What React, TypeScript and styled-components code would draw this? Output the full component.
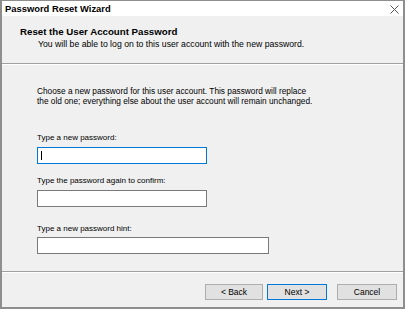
import React from "react"
import styled, { createGlobalStyle } from "styled-components"

const GlobalStyle = createGlobalStyle`
    html, body {
        margin: 0;
        padding: 0;
        background: #f0f0f0;
    }
    body {
        font-family: "Liberation Sans", Arial, sans-serif;
        color: #000;
    }
`

const Window = styled.div`
    box-sizing: border-box;
    width: 405px;
    height: 309px;
    border: 2px solid #8e8e8e;
    border-top-width: 1px;
    background: #f0f0f0;
    display: flex;
    flex-direction: column;
`

const TitleBar = styled.div`
    height: 15px;
    background: #fff;
    display: flex;
    align-items: center;
    justify-content: space-between;
    padding: 0 4px 0 3px;
`

const TitleText = styled.span`
    font-size: 9.4px;
    font-weight: bold;
    line-height: 11px;
`

const CloseIcon = styled.svg`
    width: 9px;
    height: 9px;
    margin-top: 1px;
`

const Header = styled.div`
    height: 48px;
    box-sizing: border-box;
    padding: 10px 0 0 18px;
    border-bottom: 1px solid #a0a0a0;
    box-shadow: 0 1px 0 #fff;
`

const HeaderTitle = styled.div`
    font-size: 9.7px;
    font-weight: bold;
    line-height: 11px;
`

const HeaderSub = styled.div`
    font-size: 8.7px;
    line-height: 10px;
    padding-left: 18px;
    margin-top: 2px;
`

const Body = styled.div`
    flex: 1;
    margin-top: 1px;
    padding: 21px 0 0 35px;
    border-bottom: 1px solid #a0a0a0;
    box-shadow: 0 1px 0 #fff;
    display: flex;
    flex-direction: column;
    align-items: flex-start;
`

const Paragraph = styled.p`
    margin: 0 0 27px;
    font-size: 8.3px;
    line-height: 10px;
`

const Label = styled.div<{ gap: number }>`
    font-size: 8px;
    line-height: 10px;
    margin-bottom: ${(p) => p.gap}px;
`

const Field = styled.div<{ width: number; focused?: boolean; after: number }>`
    box-sizing: border-box;
    width: ${(p) => p.width}px;
    height: 17px;
    background: #fff;
    border: 1px solid ${(p) => (p.focused ? "#0078d7" : "#7a7a7a")};
    margin-bottom: ${(p) => p.after}px;
    display: flex;
    align-items: center;
    padding-left: 3px;
`

const Caret = styled.span`
    width: 1px;
    height: 9px;
    background: #000;
`

const Footer = styled.div`
    margin-top: 1px;
    height: 34px;
    display: flex;
    justify-content: flex-end;
    align-items: flex-start;
    padding: 11px 6px 0 0;
    box-sizing: border-box;
`

const Button = styled.div<{ primary?: boolean; width: number; gapLeft: number }>`
    box-sizing: border-box;
    width: ${(p) => p.width}px;
    height: 16px;
    margin-left: ${(p) => p.gapLeft}px;
    background: #e1e1e1;
    border: 1px solid ${(p) => (p.primary ? "#0078d7" : "#adadad")};
    font-size: 8.5px;
    display: flex;
    align-items: center;
    justify-content: center;
`

const App: React.FC = () => {
    return (
        <>
            <GlobalStyle />
            <Window>
                <TitleBar>
                    <TitleText>Password Reset Wizard</TitleText>
                    <CloseIcon viewBox="0 0 9 9">
                        <path d="M0.5 0.5 L8.5 8.5 M8.5 0.5 L0.5 8.5" stroke="#555" strokeWidth="1" />
                    </CloseIcon>
                </TitleBar>
                <Header>
                    <HeaderTitle>Reset the User Account Password</HeaderTitle>
                    <HeaderSub>You will be able to log on to this user account with the new password.</HeaderSub>
                </Header>
                <Body>
                    <Paragraph>
                        Choose a new password for this user account. This password will replace
                        <br />
                        the old one; everything else about the user account will remain unchanged.
                    </Paragraph>
                    <Label gap={4}>Type a new password:</Label>
                    <Field width={170} focused after={12}>
                        <Caret />
                    </Field>
                    <Label gap={4}>Type the password again to confirm:</Label>
                    <Field width={170} after={17} />
                    <Label gap={3}>Type a new password hint:</Label>
                    <Field width={232} after={0} />
                </Body>
                <Footer>
                    <Button width={58} gapLeft={0}>&lt; Back</Button>
                    <Button width={60} gapLeft={4} primary>Next &gt;</Button>
                    <Button width={60} gapLeft={10}>Cancel</Button>
                </Footer>
            </Window>
        </>
    )
}

export default App
